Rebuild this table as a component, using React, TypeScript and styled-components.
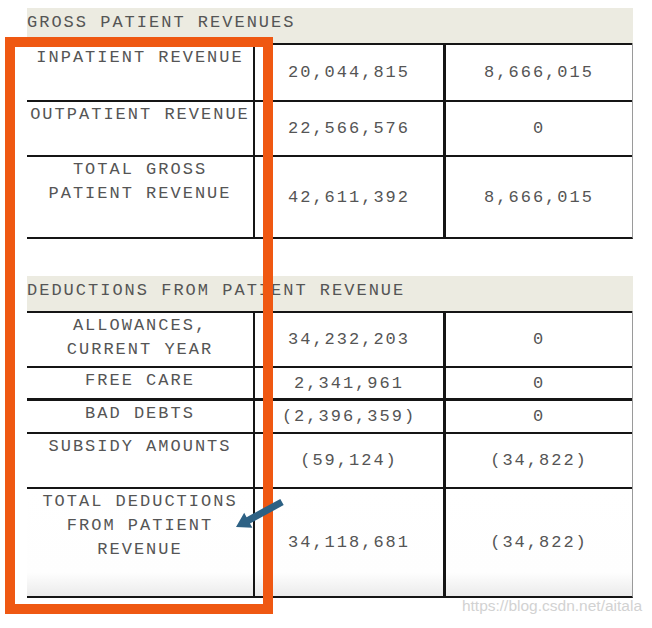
import React from 'react';
import styled, { createGlobalStyle } from 'styled-components';

const GlobalStyle = createGlobalStyle`
  html, body {
    margin: 0;
    padding: 0;
    background: #ffffff;
  }
  body {
    font-family: "Liberation Mono", "Courier New", monospace;
  }
`;

const Page = styled.div`
  position: relative;
  width: 652px;
  height: 628px;
  box-sizing: border-box;
  padding: 8px 0 0 27px;
  overflow: hidden;
  background: #ffffff;
`;

const Sheet = styled.div`
  width: 606px;
  display: flex;
  flex-direction: column;
`;

const Band = styled.div<{ $gapTop?: number }>`
  height: 35px;
  box-sizing: border-box;
  margin-top: ${(p) => p.$gapTop ?? 0}px;
  padding-top: 3px;
  background: #ecebe1;
  color: #555555;
  font-size: 17px;
  line-height: 24px;
  letter-spacing: 2px;
  white-space: nowrap;
`;

const Table = styled.div`
  display: flex;
  flex-direction: column;
  border-right: 1px solid #9a9a9a;
  border-bottom: 2px solid #151515;
`;

const Row = styled.div<{ $h: number; $thick?: boolean; $shade?: boolean }>`
  display: grid;
  grid-template-columns: 226px 190px 189px;
  height: ${(p) => p.$h}px;
  box-sizing: border-box;
  border-top: ${(p) => (p.$thick ? 3 : 2)}px solid #151515;
  background: ${(p) =>
    p.$shade ? 'linear-gradient(to bottom, #ffffff 0%, #fefefe 78%, #ebebeb 100%)' : '#ffffff'};
  color: #555555;
  font-size: 17px;
  letter-spacing: 2px;
`;

const Label = styled.div`
  text-align: center;
  line-height: 24px;
  padding-top: 1px;
  white-space: nowrap;
`;

const Value = styled.div<{ $edge: number }>`
  display: flex;
  align-items: center;
  justify-content: center;
  border-left: ${(p) => p.$edge}px solid #151515;
  white-space: nowrap;
`;

const Highlight = styled.div`
  position: absolute;
  left: 5px;
  top: 37px;
  width: 268px;
  height: 577px;
  box-sizing: border-box;
  border: 10px solid #ef5812;
  pointer-events: none;
`;

const Pointer = styled.svg`
  position: absolute;
  left: 230px;
  top: 495px;
  width: 60px;
  height: 40px;
  pointer-events: none;
`;

const Watermark = styled.div`
  position: absolute;
  right: 10px;
  top: 597px;
  font-family: "Liberation Sans", Arial, sans-serif;
  font-size: 15.5px;
  color: #d2d2d2;
  letter-spacing: 0;
`;

interface LineItem {
  label: string[];
  a: string;
  b: string;
  h: number;
  thick?: boolean;
  shade?: boolean;
}

const gross: LineItem[] = [
  { label: ['INPATIENT REVENUE'], a: '20,044,815', b: '8,666,015', h: 57 },
  { label: ['OUTPATIENT REVENUE'], a: '22,566,576', b: '0', h: 55 },
  { label: ['TOTAL GROSS', 'PATIENT REVENUE'], a: '42,611,392', b: '8,666,015', h: 82 },
];

const deductions: LineItem[] = [
  { label: ['ALLOWANCES,', 'CURRENT YEAR'], a: '34,232,203', b: '0', h: 55 },
  { label: ['FREE CARE'], a: '2,341,961', b: '0', h: 32 },
  { label: ['BAD DEBTS'], a: '(2,396,359)', b: '0', h: 34, thick: true },
  { label: ['SUBSIDY AMOUNTS'], a: '(59,124)', b: '(34,822)', h: 55 },
  {
    label: ['TOTAL DEDUCTIONS', 'FROM PATIENT', 'REVENUE'],
    a: '34,118,681',
    b: '(34,822)',
    h: 109,
    shade: true,
  },
];

const Rows: React.FC<{ items: LineItem[] }> = ({ items }) => (
  <Table>
    {items.map((it) => (
      <Row key={it.label.join(' ')} $h={it.h} $thick={it.thick} $shade={it.shade}>
        <Label>
          {it.label.map((l) => (
            <div key={l}>{l}</div>
          ))}
        </Label>
        <Value $edge={2}>{it.a}</Value>
        <Value $edge={3}>{it.b}</Value>
      </Row>
    ))}
  </Table>
);

const App: React.FC = () => {
  return (
    <>
      <GlobalStyle />
      <Page>
        <Sheet>
          <Band>GROSS PATIENT REVENUES</Band>
          <Rows items={gross} />
          <Band $gapTop={37}>DEDUCTIONS FROM PATIENT REVENUE</Band>
          <Rows items={deductions} />
        </Sheet>

        <Highlight />
        <Pointer viewBox="0 0 60 40">
          <polygon
            points="50.3,3.9 16.6,22.2 14.2,17.8 6,32 22.4,32.8 20,28.4 53.7,10.1"
            fill="#2d6184"
          />
        </Pointer>
        <Watermark>https://blog.csdn.net/aitala</Watermark>
      </Page>
    </>
  );
};

export default App;
